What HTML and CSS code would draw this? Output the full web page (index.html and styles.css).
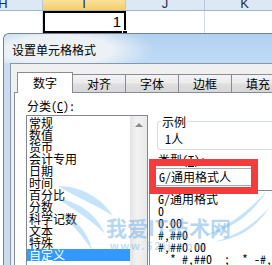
FILE: index.html
```html
<!DOCTYPE html>
<html lang="zh">
<head>
  <meta charset="UTF-8">
  <title>设置单元格格式</title>
  <link rel="stylesheet" href="styles.css">
</head>
<body>

<div class="sheet">
  <div class="heads">
    <div class="head w-h">H</div>
    <div class="head w-i sel">I</div>
    <div class="head w-j">J</div>
    <div class="head w-k">K</div>
  </div>
  <div class="row">
    <div class="cell w-h"></div>
    <div class="cell w-i active">1<span class="handle"></span></div>
    <div class="cell w-j"></div>
    <div class="cell w-k"></div>
  </div>
</div>

<div class="dialog">
  <div class="titlebar">设置单元格格式</div>
  <div class="client">
    <div class="tabs">
      <div class="tab active">数字</div>
      <div class="tab">对齐</div>
      <div class="tab">字体</div>
      <div class="tab">边框</div>
      <div class="tab">填充</div>
    </div>
    <div class="page">
      <div class="cat">
        <div class="label">分类(<u>C</u>):</div>
        <div class="listbox">
          <div class="items">
            <div class="item">常规</div>
            <div class="item">数值</div>
            <div class="item">货币</div>
            <div class="item">会计专用</div>
            <div class="item">日期</div>
            <div class="item">时间</div>
            <div class="item">百分比</div>
            <div class="item">分数</div>
            <div class="item">科学记数</div>
            <div class="item">文本</div>
            <div class="item">特殊</div>
            <div class="item sel">自定义</div>
          </div>
          <div class="vscroll"><div class="up"></div></div>
        </div>
      </div>
      <div class="fmt">
        <div class="sample">
          <span class="sample-label">示例</span>
          <div class="sample-value">1人</div>
        </div>
        <div class="type-label">类型(<u>T</u>):</div>
        <div class="type-input">G/通用格式人</div>
        <div class="type-list">
          <div class="item">G/通用格式</div>
          <div class="item">0</div>
          <div class="item">0.00</div>
          <div class="item">#,##0</div>
          <div class="item">#,##0.00</div>
          <div class="item">_ * #,##0_ ;_ * -#,##0_ ;_ * "-"_ ;_ @_</div>
          <div class="item">_ * #,##0.00_ ;_ * -#,##0.00_ </div>
        </div>
      </div>
    </div>
  </div>
</div>

<div class="mark"></div>

<div class="wm">
  <svg class="wing" width="272" height="265" viewBox="0 0 272 265">
    <path d="M58 186 C80 186 101 197 113 216 C96 205 78 198 58 186 Z"/>
    <path d="M56 198 C77 201 96 213 105 234 C90 219 74 209 56 198 Z"/>
    <path d="M60 212 C75 219 88 231 92 250 C82 235 72 225 60 212 Z"/>
    <path d="M204 236 C226 227 249 212 267 190 C253 214 232 229 204 236 Z"/>
    <path d="M214 242 C236 236 253 225 269 208 C256 228 238 239 214 242 Z"/>
  </svg>
  <div class="wm-name">我爱IT技术网</div>
  <div class="wm-url">www.52ij.com</div>
</div>

</body>
</html>
```

FILE: styles.css
```css
* {
  box-sizing: border-box;
}
body {
  margin: 0;
  width: 272px;
  height: 265px;
  overflow: hidden;
  position: relative;
  background: #fff;
  font-family: "Noto Sans Mono CJK SC", "Noto Sans CJK SC", sans-serif;
  font-size: 12px;
  color: #000;
}
u {
  text-decoration: underline;
}

/* excel sheet behind the dialog */
.sheet {
  height: 33px;
  overflow: hidden;
}
.heads,
.row {
  display: flex;
  margin-left: -36px;
}
.heads {
  height: 11px;
  background: #dde8f5;
  border-bottom: 1px solid #9fb6cf;
}
.head {
  height: 10px;
  flex: none;
  border-right: 1px solid #b9c9dc;
  font: 13px/12px "Liberation Sans", sans-serif;
  color: #1d2f47;
  display: flex;
  justify-content: center;
  align-items: flex-end;
  overflow: hidden;
}
.head.sel {
  background: linear-gradient(#fbe29f, #f6cc66);
}
.w-h { width: 79px; }
.w-i { width: 83px; }
.w-j { width: 79px; }
.w-k { width: 80px; }
.row {
  height: 22px;
}
.cell {
  flex: none;
  border-right: 1px solid #d4dbe6;
}
.cell.active {
  position: relative;
  border: 2px solid #000;
  padding-right: 3px;
  text-align: right;
  font: 15px/18px "Liberation Sans", sans-serif;
}
.handle {
  position: absolute;
  right: -4px;
  bottom: -5px;
  width: 6px;
  height: 6px;
  background: #000;
  border: 1px solid #fff;
  z-index: 3;
}

/* dialog */
.dialog {
  margin-left: 3px;
  height: 232px;
  border: 1px solid #6f8399;
  border-right: 0;
  border-bottom: 0;
  border-radius: 6px 0 0 0;
  background: #cbdcee;
  overflow: hidden;
}
.titlebar {
  height: 29px;
  padding: 2px 0 0 8px;
  line-height: 27px;
  font-family: "Noto Sans CJK SC", sans-serif;
  font-size: 12px;
  background:
    radial-gradient(ellipse 95px 26px at 55px 55%, rgba(236,241,246,1) 55%, rgba(236,241,246,0)),
    linear-gradient(#b3d1f0, #bedbf6);
  border-radius: 5px 0 0 0;
}
.client {
  margin-left: 6px;
  height: 202px;
  background: #f0f0f0;
  border-top: 1px solid #8497ad;
  border-left: 1px solid #8497ad;
  padding-top: 8px;
  overflow: hidden;
}
.tabs {
  display: flex;
  align-items: flex-end;
  height: 20px;
  margin-left: 6px;
  position: relative;
  z-index: 1;
}
.tab {
  flex: none;
  width: 54px;
  height: 18px;
  margin-left: -1px;
  border: 1px solid #898c95;
  border-bottom: 0;
  background: linear-gradient(#f4f4f4, #ececec 45%, #dedede 55%, #d7d7d7);
  text-align: center;
  line-height: 17px;
  font-family: "Noto Sans CJK SC", sans-serif;
}
.tab.active {
  width: 56px;
  height: 21px;
  margin-left: 0;
  margin-bottom: -1px;
  background: #fff;
  line-height: 20px;
  position: relative;
  z-index: 1;
}
.page {
  margin-left: 3px;
  height: 173px;
  border: 1px solid #898c95;
  border-right: 0;
  border-bottom: 0;
  background: #fff;
  display: flex;
  overflow: hidden;
}
.cat {
  flex: none;
  width: 133px;
  padding: 7px 0 0 12px;
}
.label {
  line-height: 12px;
}
.listbox {
  display: flex;
  margin: 3px 0 0 -1px;
  width: 122px;
  height: 150px;
  border: 1px solid #828790;
  border-bottom: 0;
}
.items {
  flex: 1;
  padding-top: 1px;
}
.item {
  height: 12px;
  line-height: 12px;
  padding-left: 2px;
  white-space: nowrap;
}
.item.sel {
  background: #3399ff;
  color: #fff;
}
.vscroll {
  width: 17px;
  background: linear-gradient(90deg, #e3e3e3, #f2f2f2 40%, #e9e9e9);
}
.up {
  height: 17px;
  display: flex;
  justify-content: center;
  align-items: center;
}
.up::before {
  content: "";
  border: 4px solid transparent;
  border-top: 0;
  border-bottom: 4px solid #8a8a8a;
}

.fmt {
  flex: 1;
  min-width: 0;
}
.sample {
  margin: 28px 0 0 9px;
  height: 29px;
  border: 1px solid #d5dfe5;
  border-right: 0;
  border-radius: 3px 0 0 3px;
  padding-left: 7px;
}
.sample-label {
  display: block;
  width: max-content;
  margin: -6px 0 0 -4px;
  padding: 0 1px;
  background: #fff;
  line-height: 12px;
}
.sample-value {
  margin-top: 5px;
  line-height: 12px;
}
.type-label {
  margin: 4px 0 0 10px;
  line-height: 12px;
}
.type-input {
  margin: 2px 0 0 7px;
  width: 100px;
  height: 18px;
  border: 1px solid #abadb3;
  padding-left: 3px;
  line-height: 16px;
  white-space: nowrap;
}
.type-list {
  margin: 4px 0 0 1px;
  height: 75px;
  border: 1px solid #828790;
  border-right: 0;
  border-bottom: 0;
  padding: 2px 0 0 6px;
  overflow: hidden;
}

/* red annotation frame */
.mark {
  position: absolute;
  left: 149px;
  top: 159px;
  width: 109px;
  height: 35px;
  border: 7px solid #f43c3c;
}

/* watermark */
.wm {
  position: absolute;
  left: 0;
  top: 0;
  width: 272px;
  height: 265px;
  pointer-events: none;
}
.wing {
  position: absolute;
  left: 0;
  top: 0;
  fill: rgba(110, 185, 240, 0.4);
}
.wm-name {
  position: absolute;
  left: 106px;
  top: 217px;
  font: bold 21px/21px "Noto Sans CJK SC", sans-serif;
  color: rgba(90, 165, 230, 0.45);
  white-space: nowrap;
}
.wm-url {
  position: absolute;
  left: 110px;
  top: 240px;
  font: bold 11px/12px "Liberation Sans", sans-serif;
  letter-spacing: 2px;
  color: rgba(110, 180, 235, 0.45);
}
```
